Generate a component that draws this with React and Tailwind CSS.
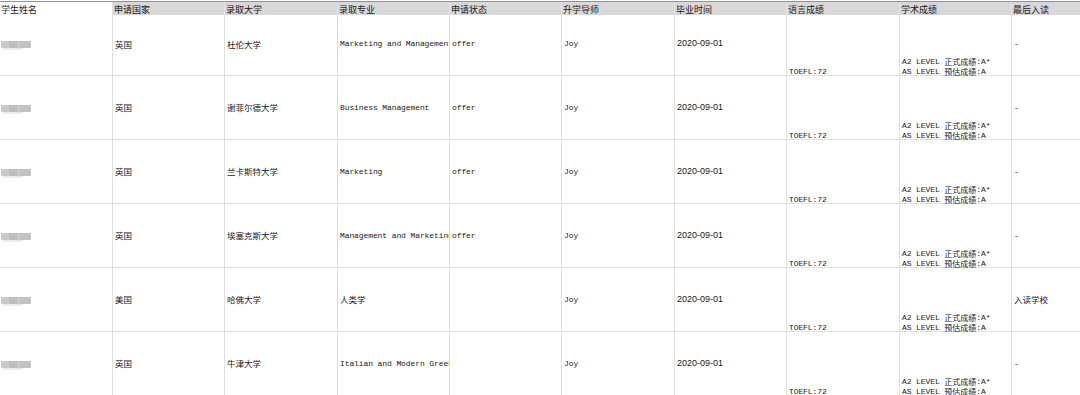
import React from "react";

const COLS = "grid-cols-[113px_112px_113px_112px_112px_113px_112px_113px_112px_1fr]";

const headers = ["学生姓名", "申请国家", "录取大学", "录取专业", "申请状态", "升学导师", "毕业时间", "语言成绩", "学术成绩", "最后入读"];

const rows = [
  { country: "英国", uni: "杜伦大学", major: "Marketing and Management", status: "offer", last: "-" },
  { country: "英国", uni: "谢菲尔德大学", major: "Business Management", status: "offer", last: "-" },
  { country: "英国", uni: "兰卡斯特大学", major: "Marketing", status: "offer", last: "-" },
  { country: "英国", uni: "埃塞克斯大学", major: "Management and Marketing", status: "offer", last: "-" },
  { country: "美国", uni: "哈佛大学", major: "人类学", status: "", last: "入读学校" },
  { country: "英国", uni: "牛津大学", major: "Italian and Modern Greek", status: "", last: "-" },
];

function Mono({ children }) {
  return (
    <span className="whitespace-pre font-['Liberation_Mono','Noto_Sans_CJK_SC',monospace] text-[8px] tracking-[-0.1px]">
      {children}
    </span>
  );
}

function Cjk({ children, size = "text-[8.5px]" }) {
  return <span className={`font-['Noto_Sans_CJK_SC',sans-serif] ${size}`}>{children}</span>;
}

function isCjk(s) {
  return /[\u4e00-\u9fff]/.test(s);
}

function Cell({ children, align = "center", last }) {
  const al = align === "bottom" ? "items-end" : "items-center";
  return (
    <div className={`flex ${al} overflow-x-clip whitespace-nowrap pl-[2px] ${last ? "" : "border-r border-[#e0e0e0]"}`}>
      {children}
    </div>
  );
}

function NameBlur() {
  return (
    <div className="relative h-[8px] w-[30px] -ml-[1px]">
      <div className="absolute left-0 top-[1px] h-[7px] w-[30px] bg-[#c9c9c9] blur-[0.6px]" />
      <div className="absolute left-[8px] top-[1px] h-[7px] w-[8px] bg-[#bdbdbd] blur-[0.5px]" />
      <div className="absolute left-[19px] top-[1px] h-[7px] w-[10px] bg-[#c2c2c2] blur-[0.5px]" />
      <div className="absolute left-[2px] top-[8px] h-[2px] w-[20px] bg-[#ececec]" />
    </div>
  );
}

export default function App() {
  return (
    <div className="h-[395px] w-[1080px] overflow-hidden bg-white text-[#1a1a1a]">
      <div className={`mt-px grid ${COLS} h-[12px] border-y border-[#68b168]`}>
        {headers.map((h, i) => (
          <div
            key={h}
            className={`relative z-10 overflow-x-clip whitespace-nowrap pl-[1px] leading-[10px] ${i === 0 ? "bg-white" : "bg-[#d8d8d8]"} ${i < 9 ? "border-r border-[#e4e4e4]" : ""}`}
          >
            <Cjk size="text-[9px]">{h}</Cjk>
          </div>
        ))}
      </div>
      {rows.map((r, idx) => (
        <div
          key={idx}
          className={`grid ${COLS} ${idx === 0 ? "h-[63px]" : "h-[64px]"} border-b border-[#e0e0e0]`}
        >
          <Cell>
            <NameBlur />
          </Cell>
          <Cell>
            <Cjk>{r.country}</Cjk>
          </Cell>
          <Cell>
            <Cjk>{r.uni}</Cjk>
          </Cell>
          <Cell>{isCjk(r.major) ? <Cjk>{r.major}</Cjk> : <Mono>{r.major}</Mono>}</Cell>
          <Cell>
            <Mono>{r.status}</Mono>
          </Cell>
          <Cell>
            <Mono>Joy</Mono>
          </Cell>
          <Cell>
            <span className="font-['Liberation_Sans',sans-serif] text-[9px]">2020-09-01</span>
          </Cell>
          <Cell align="bottom">
            <div className="-mb-[2px] flex h-[10px] items-center">
              <Mono>TOEFL:72</Mono>
            </div>
          </Cell>
          <Cell align="bottom">
            <div className="-mb-[1.5px] flex flex-col">
              <div className="flex h-[10px] items-center">
                <Mono>A2 LEVEL </Mono>
                <Cjk size="text-[8px]">正式成绩</Cjk>
                <Mono>:A*</Mono>
              </div>
              <div className="flex h-[10px] items-center">
                <Mono>AS LEVEL </Mono>
                <Cjk size="text-[8px]">预估成绩</Cjk>
                <Mono>:A</Mono>
              </div>
            </div>
          </Cell>
          <Cell last>
            {isCjk(r.last) ? <Cjk>{r.last}</Cjk> : <Mono>{r.last}</Mono>}
          </Cell>
        </div>
      ))}
    </div>
  );
}
